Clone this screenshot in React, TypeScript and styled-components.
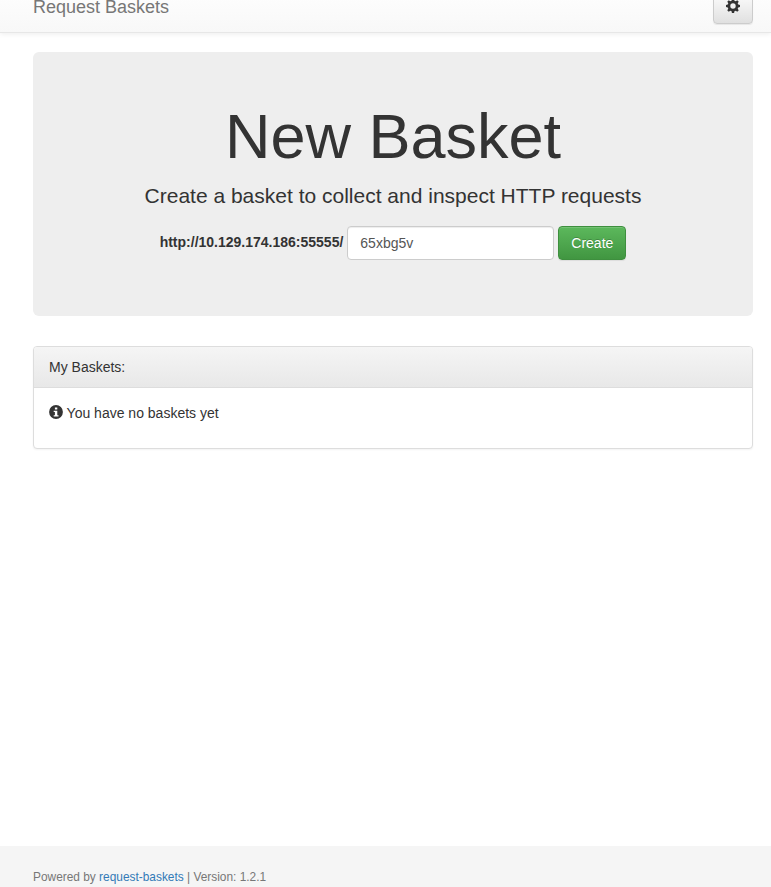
import React from "react";
import styled, { createGlobalStyle } from "styled-components";

const GlobalStyle = createGlobalStyle`
  *, *::before, *::after { box-sizing: border-box; }
  html, body { margin: 0; padding: 0; overflow: hidden; }
  body {
    font-family: "Liberation Sans", Arial, sans-serif;
    font-size: 14px;
    line-height: 20px;
    color: #333;
    background: #fff;
  }
`;

const Page = styled.div`
  height: 887px;
  display: flex;
  flex-direction: column;
  overflow: hidden;
`;

const Navbar = styled.nav`
  flex: none;
  height: 51px;
  margin-top: -18px;
  padding: 0 18px 0 33px;
  display: flex;
  align-items: flex-end;
  justify-content: space-between;
  background: linear-gradient(to bottom, #fff 0%, #f8f8f8 100%);
  border-bottom: 1px solid #e7e7e7;
  box-shadow: inset 0 1px 0 rgba(255, 255, 255, 0.15), 0 1px 5px rgba(0, 0, 0, 0.075);
`;

const Brand = styled.span`
  font-size: 18px;
  line-height: 20px;
  color: #777;
  margin-bottom: 15px;
  text-shadow: 0 1px 0 rgba(255, 255, 255, 0.25);
`;

const SettingsButton = styled.button`
  width: 40px;
  height: 34px;
  margin: 0 0 8px;
  padding: 0 0 2px;
  display: flex;
  align-items: center;
  justify-content: center;
  color: #333;
  background: linear-gradient(to bottom, #fff 0%, #e0e0e0 100%);
  border: 1px solid #ccc;
  border-radius: 4px;
  box-shadow: inset 0 1px 0 rgba(255, 255, 255, 0.15), 0 1px 1px rgba(0, 0, 0, 0.075);
`;

const Main = styled.main`
  flex: 1;
  padding: 19px 18px 0 33px;
`;

const Jumbotron = styled.section`
  height: 264px;
  padding: 48px 60px;
  margin-bottom: 30px;
  text-align: center;
  background: #eee;
  border-radius: 6px;
`;

const Title = styled.h1`
  margin: 2px 0 10px;
  font-size: 63px;
  line-height: 69px;
  font-weight: 500;
`;

const Lead = styled.p`
  margin: 0 0 15px;
  font-size: 21px;
  line-height: 30px;
  font-weight: 400;
`;

const Form = styled.form`
  display: flex;
  justify-content: center;
  gap: 4px;
`;

const Label = styled.label`
  font-weight: 700;
  line-height: 20px;
  margin-top: 6px;
`;

const Input = styled.input`
  width: 207px;
  height: 34px;
  padding: 6px 12px;
  font: inherit;
  color: #555;
  background: #fff;
  border: 1px solid #ccc;
  border-radius: 4px;
  box-shadow: inset 0 1px 1px rgba(0, 0, 0, 0.075);
`;

const CreateButton = styled.button`
  width: 68px;
  height: 34px;
  padding: 0;
  font: inherit;
  color: #fff;
  text-shadow: 0 -1px 0 rgba(0, 0, 0, 0.2);
  background: linear-gradient(to bottom, #5cb85c 0%, #419641 100%);
  border: 1px solid #3e8f3e;
  border-radius: 4px;
  box-shadow: inset 0 1px 0 rgba(255, 255, 255, 0.15), 0 1px 1px rgba(0, 0, 0, 0.075);
`;

const Panel = styled.section`
  height: 103px;
  background: #fff;
  border: 1px solid #ddd;
  border-radius: 4px;
  box-shadow: 0 1px 2px rgba(0, 0, 0, 0.05);
`;

const PanelHeading = styled.header`
  height: 41px;
  padding: 10px 15px;
  background: linear-gradient(to bottom, #f5f5f5 0%, #e8e8e8 100%);
  border-bottom: 1px solid #ddd;
  border-radius: 3px 3px 0 0;
`;

const PanelBody = styled.div`
  display: flex;
  gap: 3.6px;
  padding: 15px;
`;

const Icon = styled.svg`
  display: block;
  flex: none;
  width: 14px;
  height: 14px;
  fill: currentColor;
`;

const InfoIcon = styled(Icon)`
  margin-top: 2px;
`;

const Footer = styled.footer`
  flex: none;
  height: 41px;
  padding: 21px 33px 0;
  font-size: 11.9px;
  line-height: 20px;
  color: #777;
  background: #f5f5f5;
`;

const Link = styled.a`
  color: #337ab7;
  text-decoration: none;
`;

export default function App() {
  return (
    <Page>
      <GlobalStyle />
      <Navbar>
        <Brand>Request Baskets</Brand>
        <SettingsButton type="button" aria-label="Settings">
          <Icon viewBox="0 0 14 14">
            <path
              fillRule="evenodd"
              d="M5.9 0h2.2l.3 1.75 1.35.55 1.5-1.05 1.5 1.5-1.05 1.5.55 1.35L14 5.9v2.2l-1.75.3-.55 1.35 1.05 1.5-1.5 1.5-1.5-1.05-1.35.55L8.1 14H5.9l-.3-1.75-1.35-.55-1.5 1.05-1.5-1.5 1.05-1.5-.55-1.35L0 8.1V5.9l1.75-.3.55-1.35-1.05-1.5 1.5-1.5 1.5 1.05L5.6 1.75zM7 4.3a2.7 2.7 0 1 0 0 5.4 2.7 2.7 0 0 0 0-5.4z"
            />
          </Icon>
        </SettingsButton>
      </Navbar>
      <Main>
        <Jumbotron>
          <Title>New Basket</Title>
          <Lead>Create a basket to collect and inspect HTTP requests</Lead>
          <Form onSubmit={(event) => event.preventDefault()}>
            <Label htmlFor="basket_name">http://10.129.174.186:55555/</Label>
            <Input id="basket_name" type="text" defaultValue="65xbg5v" />
            <CreateButton type="submit">Create</CreateButton>
          </Form>
        </Jumbotron>
        <Panel>
          <PanelHeading>My Baskets:</PanelHeading>
          <PanelBody>
            <InfoIcon viewBox="0 0 14 14">
              <path
                fillRule="evenodd"
                d="M7 .1a6.9 6.9 0 1 0 0 13.8A6.9 6.9 0 0 0 7 .1zM5.9 2.4h2.4v2.1H5.9zM4.7 5.8h3.6v4.4h1.2v1.4H4.7v-1.4h1.2V7.1H4.7z"
              />
            </InfoIcon>
            <span>You have no baskets yet</span>
          </PanelBody>
        </Panel>
      </Main>
      <Footer>
        Powered by <Link href="#">request-baskets</Link> | Version: 1.2.1
      </Footer>
    </Page>
  );
}
